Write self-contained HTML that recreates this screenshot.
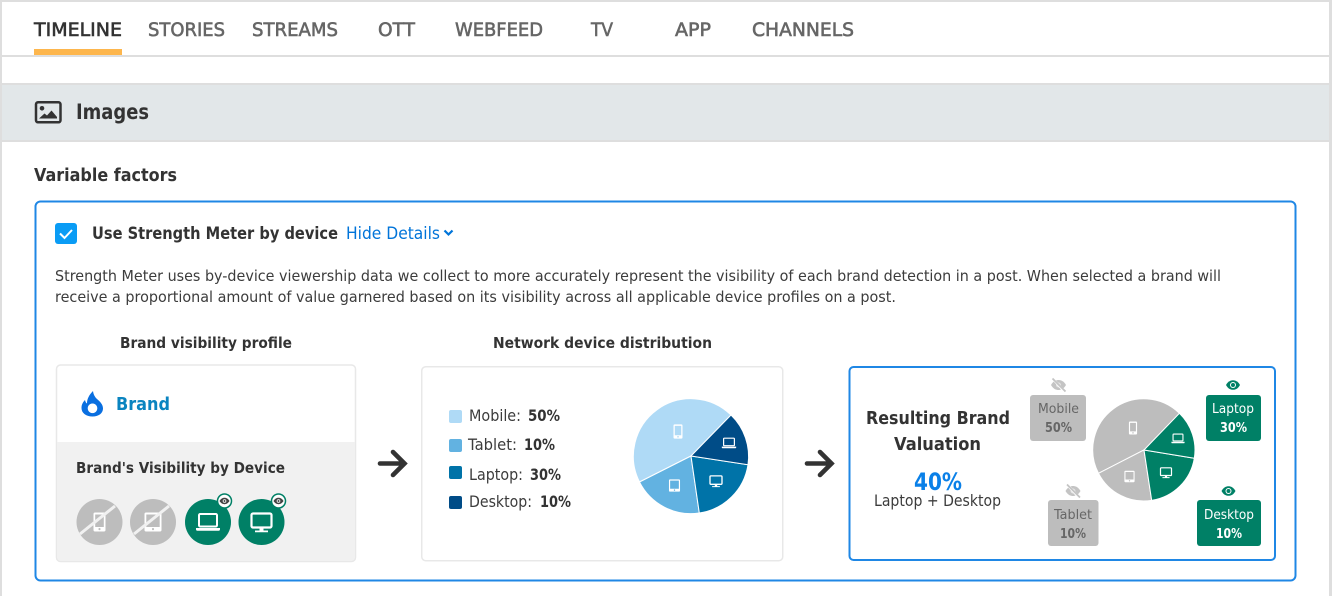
<!DOCTYPE html>
<html><head><meta charset="utf-8"><style>
html,body{margin:0;padding:0;background:#fff;width:1332px;height:596px;overflow:hidden}
svg{display:block}
text{font-family:"DejaVu Sans","Liberation Sans",sans-serif;fill:currentColor;color:#333;stroke:none}
.b{font-weight:700}
.s{stroke:currentColor;stroke-width:.6px}
.g{color:#666}
.r{color:#3c3c3c}
.w{color:#fff}
</style></head><body>
<svg width="1332" height="596" viewBox="0 0 1332 596" xmlns="http://www.w3.org/2000/svg">
<defs>
<g id="phone"><path fill="#fff" fill-rule="evenodd" d="M-4.500-9.500h9a1.500 1.500 0 0 1 1.500 1.500v16a1.500 1.500 0 0 1-1.500 1.500h-9a1.500 1.500 0 0 1-1.500-1.500v-16a1.500 1.500 0 0 1 1.500-1.500zM-4.300-7.500v12.500h8.600v-12.500zM0 6a1.100 1.100 0 1 0 .01 0z"/></g>
<g id="tablet"><path fill="#fff" fill-rule="evenodd" d="M-7-9.500h14a1.500 1.500 0 0 1 1.500 1.500v16a1.500 1.500 0 0 1-1.500 1.500h-14a1.500 1.500 0 0 1-1.500-1.500v-16a1.500 1.500 0 0 1 1.500-1.500zM-6.700-7.500v12.500h13.400v-12.500zM0 6a1.100 1.100 0 1 0 .01 0z"/></g>
<g id="laptop"><rect x="-9" y="-8" width="18" height="12.500" rx="1.200" fill="none" stroke="#fff" stroke-width="2"/><path fill="#fff" d="M-12 6h24v1.500a1.200 1.200 0 0 1-1.200 1.200h-21.600a1.200 1.200 0 0 1-1.200-1.200z"/></g>
<g id="monitor"><rect x="-10" y="-8.500" width="20" height="14" rx="1.500" fill="none" stroke="#fff" stroke-width="2.200"/><path fill="#fff" d="M-2 6h4v2.500h4.500v1.800h-13v-1.800h4.500z"/></g>
<g id="eye"><path d="M-7 0C-5-3.800-2.200-4.800 0-4.800S5-3.800 7 0C5 3.800 2.200 4.800 0 4.800S-5 3.800-7 0z" fill="#008066"/><circle r="3" fill="#fff"/><circle r="2" fill="#008066"/></g>
<g id="eyeoff"><path d="M-7.500 0C-5.200-4.200-2.200-5 0-5S5.200-4.200 7.500 0C5.200 4.200 2.200 5 0 5S-5.200 4.200-7.500 0z" fill="#c4c4c4"/><circle r="2.500" fill="#e4e4e4"/><path d="M-5.500-6L6.500 7" stroke="#fff" stroke-width="2.500"/><path d="M-6-6.500L7 6.500" stroke="#c4c4c4" stroke-width="1.800"/></g>
<g id="mineye"><path d="M-5 0C-3.500-2.500-1.500-3.200 0-3.200S3.500-2.500 5 0C3.500 2.500 1.500 3.200 0 3.200S-3.500 2.500-5 0z" fill="#444"/><circle r="1.800" fill="#fff"/><circle r="1" fill="#444"/></g>
</defs>

<rect width="1332" height="596" fill="#fff"/>
<rect x="0" y="0" width="1332" height="2" fill="#dedede"/>
<rect x="0" y="0" width="2" height="596" fill="#dedede"/>
<rect x="1329" y="0" width="3" height="596" fill="#dedede"/>

<!-- tabs -->
<rect x="2" y="55" width="1327" height="2" fill="#dedede"/>
<rect x="34" y="49" width="88" height="6" fill="#fdb64d"/>
<g font-size="19">
<text class="s" x="34" y="36" textLength="88" lengthAdjust="spacingAndGlyphs">TIMELINE</text>
<text class="s g" x="148" y="36" textLength="77" lengthAdjust="spacingAndGlyphs">STORIES</text>
<text class="s g" x="252" y="36" textLength="86" lengthAdjust="spacingAndGlyphs">STREAMS</text>
<text class="s g" x="378" y="36" textLength="37" lengthAdjust="spacingAndGlyphs">OTT</text>
<text class="s g" x="455" y="36" textLength="88" lengthAdjust="spacingAndGlyphs">WEBFEED</text>
<text class="s g" x="591" y="36" textLength="22" lengthAdjust="spacingAndGlyphs">TV</text>
<text class="s g" x="675" y="36" textLength="36" lengthAdjust="spacingAndGlyphs">APP</text>
<text class="s g" x="752" y="36" textLength="102" lengthAdjust="spacingAndGlyphs">CHANNELS</text>
</g>

<!-- band -->
<rect x="2" y="83" width="1327" height="59" fill="#dedede"/>
<rect x="2" y="85" width="1327" height="55" fill="#e2e7e9"/>
<rect x="36" y="102.300" width="24.500" height="20" rx="2" fill="none" stroke="#333" stroke-width="2.500"/>
<circle cx="42" cy="108.300" r="2.300" fill="#333"/>
<path d="M39 118.500h18v-1.500l-5.500-6.500-4.500 5-2.500-2z" fill="#333"/>
<text class="b" x="76" y="119" font-size="21.500" textLength="73" lengthAdjust="spacingAndGlyphs">Images</text>
<text class="b" x="34" y="181" font-size="18" textLength="143" lengthAdjust="spacingAndGlyphs">Variable factors</text>

<!-- main box -->
<rect x="35.500" y="201.500" width="1260" height="379" rx="5" fill="#fff" stroke="#1f87e5" stroke-width="2"/>
<rect x="55" y="223" width="22" height="21" rx="3" fill="#0a9cf5"/>
<path d="M60 233.500l4.500 4.500 7.500-8" fill="none" stroke="#fff" stroke-width="2"/>
<text class="b" x="92" y="239" font-size="16.500" textLength="246" lengthAdjust="spacingAndGlyphs">Use Strength Meter by device</text>
<text x="346" y="239" font-size="17" textLength="94" lengthAdjust="spacingAndGlyphs" style="color:#0074d9">Hide Details</text>
<path d="M444.500 230.500l4 4 4-4" fill="none" stroke="#0074d9" stroke-width="2.200"/>
<text class="r" x="55" y="281" font-size="15.500" textLength="1166" lengthAdjust="spacingAndGlyphs">Strength Meter uses by-device viewership data we collect to more accurately represent the visibility of each brand detection in a post. When selected a brand will</text>
<text class="r" x="55" y="302" font-size="15.500" textLength="841" lengthAdjust="spacingAndGlyphs">receive a proportional amount of value garnered based on its visibility across all applicable device profiles on a post.</text>

<text class="b" x="120" y="348" font-size="15" textLength="172" lengthAdjust="spacingAndGlyphs">Brand visibility profile</text>
<text class="b" x="493" y="348" font-size="15" textLength="219" lengthAdjust="spacingAndGlyphs">Network device distribution</text>

<!-- card 1 -->
<rect x="56.500" y="365" width="299" height="196.500" rx="4" fill="#fff" stroke="#e8e8e8" stroke-width="1.500"/>
<path d="M57 442h298v115a4 4 0 0 1-4 4H61a4 4 0 0 1-4-4z" fill="#f1f1f1"/>
<path fill-rule="evenodd" fill="#0a6fe0" d="M93 391c.5 3.500 1.500 5.500 4 8 3 2.500 6 5.500 6 9.500 0 4.500-4 8-10.500 8S81.500 413 81.500 408c0-3.500 1.500-6 3.500-8 .3 1.500 1 3 2 3.500 0-5 2.500-9 6-12.500zM92.500 403.500a4.800 4.800 0 1 0 .01 0z"/>
<text class="b" x="116" y="410" font-size="18" textLength="54" lengthAdjust="spacingAndGlyphs" style="color:#0a84c0">Brand</text>
<text class="b" x="76" y="473" font-size="15" textLength="209" lengthAdjust="spacingAndGlyphs">Brand's Visibility by Device</text>

<circle cx="99.500" cy="522" r="23" fill="#bdbdbd"/>
<use href="#phone" transform="translate(99.500 522)"/>
<path d="M80 534L115 506" stroke="#f1f1f1" stroke-width="3"/>
<circle cx="153" cy="522" r="23" fill="#bdbdbd"/>
<use href="#tablet" transform="translate(153 522)"/>
<path d="M134 534L169 506" stroke="#f1f1f1" stroke-width="3"/>
<circle cx="208" cy="522" r="23" fill="#008066"/>
<use href="#laptop" transform="translate(208 522)"/>
<circle cx="261.500" cy="522" r="23" fill="#008066"/>
<use href="#monitor" transform="translate(261.500 522)"/>
<circle cx="224.500" cy="501" r="7" fill="#fff" stroke="#008066" stroke-width="1.500"/>
<use href="#mineye" transform="translate(224.500 501)"/>
<circle cx="278.500" cy="501" r="7" fill="#fff" stroke="#008066" stroke-width="1.500"/>
<use href="#mineye" transform="translate(278.500 501)"/>

<!-- arrow 1 -->
<path d="M380 463.500h23M393 452l11.500 11.500-11.500 11.500" fill="none" stroke="#333" stroke-width="4.600" stroke-linecap="round"/>

<!-- card 2 -->
<rect x="421.750" y="366.750" width="361" height="194" rx="4" fill="#fff" stroke="#e8e8e8" stroke-width="1.500"/>
<rect x="449" y="410" width="13" height="13" rx="2" fill="#afdaf6"/>
<rect x="449" y="439" width="13" height="13" rx="2" fill="#62b2e1"/>
<rect x="449" y="466" width="13" height="13" rx="2" fill="#0073a8"/>
<rect x="449" y="496" width="13" height="13" rx="2" fill="#004c87"/>
<g font-size="16">
<text class="r" x="469" y="421" textLength="52" lengthAdjust="spacingAndGlyphs">Mobile:</text>
<text class="b" x="528" y="421" textLength="32" lengthAdjust="spacingAndGlyphs">50%</text>
<text class="r" x="468" y="450" textLength="49" lengthAdjust="spacingAndGlyphs">Tablet:</text>
<text class="b" x="524" y="450" textLength="31" lengthAdjust="spacingAndGlyphs">10%</text>
<text class="r" x="469" y="480" textLength="54" lengthAdjust="spacingAndGlyphs">Laptop:</text>
<text class="b" x="530" y="480" textLength="31" lengthAdjust="spacingAndGlyphs">30%</text>
<text class="r" x="469" y="507" textLength="63" lengthAdjust="spacingAndGlyphs">Desktop:</text>
<text class="b" x="540" y="507" textLength="31" lengthAdjust="spacingAndGlyphs">10%</text>
</g>

<!-- pie 1 -->
<g stroke="#fff" stroke-width="1">
<path d="M691 456L731 415A57.500 57.500 0 0 0 639.500 482Z" fill="#afdaf6"/>
<path d="M691 456L639.500 482A57.500 57.500 0 0 0 699.300 513Z" fill="#62b2e1"/>
<path d="M691 456L699.300 513A57.500 57.500 0 0 0 748 464.700Z" fill="#0073a8"/>
<path d="M691 456L748 464.700A57.500 57.500 0 0 0 731 415Z" fill="#004c87"/>
</g>
<use href="#phone" transform="translate(678 431.500) scale(.75)"/>
<use href="#laptop" transform="translate(729 443) scale(.6)"/>
<use href="#monitor" transform="translate(716 481) scale(.6)"/>
<use href="#tablet" transform="translate(674.500 485.500) scale(.65)"/>

<!-- arrow 2 -->
<path d="M807 463.500h23M820 452l11.500 11.500-11.500 11.500" fill="none" stroke="#333" stroke-width="4.600" stroke-linecap="round"/>

<!-- card 3 -->
<rect x="849.500" y="367" width="425.500" height="193" rx="4" fill="#fff" stroke="#1f87e5" stroke-width="2"/>
<text class="b" x="866" y="424" font-size="17.500" textLength="144" lengthAdjust="spacingAndGlyphs">Resulting Brand</text>
<text class="b" x="894" y="450" font-size="17.500" textLength="87" lengthAdjust="spacingAndGlyphs">Valuation</text>
<text class="b" x="914" y="490" font-size="24" textLength="48" lengthAdjust="spacingAndGlyphs" style="color:#0a80e8">40%</text>
<text class="r" x="874" y="506" font-size="16" textLength="127" lengthAdjust="spacingAndGlyphs">Laptop + Desktop</text>

<rect x="1030" y="395" width="56" height="46" rx="3" fill="#bdbdbd"/>
<rect x="1048" y="500" width="50.500" height="46" rx="3" fill="#bdbdbd"/>
<rect x="1206" y="395" width="55" height="46" rx="3" fill="#008066"/>
<rect x="1197" y="500" width="64" height="46" rx="3" fill="#008066"/>
<g font-size="13.500">
<text class="g" x="1038" y="413" textLength="41" lengthAdjust="spacingAndGlyphs">Mobile</text>
<text class="b g" x="1045" y="432" textLength="27" lengthAdjust="spacingAndGlyphs">50%</text>
<text class="g" x="1054" y="519" textLength="38" lengthAdjust="spacingAndGlyphs">Tablet</text>
<text class="b g" x="1060" y="538" textLength="26" lengthAdjust="spacingAndGlyphs">10%</text>
<text class="w" x="1212" y="413" textLength="42" lengthAdjust="spacingAndGlyphs">Laptop</text>
<text class="b w" x="1220" y="432" textLength="27" lengthAdjust="spacingAndGlyphs">30%</text>
<text class="w" x="1204" y="519" textLength="50" lengthAdjust="spacingAndGlyphs">Desktop</text>
<text class="b w" x="1216" y="538" textLength="26" lengthAdjust="spacingAndGlyphs">10%</text>
</g>
<use href="#eyeoff" transform="translate(1058.500 385)"/>
<use href="#eyeoff" transform="translate(1073 491)"/>
<use href="#eye" transform="translate(1233 385)"/>
<use href="#eye" transform="translate(1228.500 491)"/>

<!-- pie 2 -->
<g stroke="#fff" stroke-width="1">
<path d="M1144 450L1179.400 413.300A51 51 0 0 0 1098.500 473.300Z" fill="#bdbdbd"/>
<path d="M1144 450L1098.500 473.300A51 51 0 0 0 1151.700 500.400Z" fill="#bdbdbd"/>
<path d="M1144 450L1151.700 500.400A51 51 0 0 0 1194.300 458.300Z" fill="#008066"/>
<path d="M1144 450L1194.300 458.300A51 51 0 0 0 1179.400 413.300Z" fill="#008066"/>
</g>
<use href="#phone" transform="translate(1133 428) scale(.68)"/>
<use href="#laptop" transform="translate(1178 438.500) scale(.55)"/>
<use href="#monitor" transform="translate(1166 472.500) scale(.55)"/>
<use href="#tablet" transform="translate(1129.500 476.500) scale(.6)"/>
</svg>
</body></html>
